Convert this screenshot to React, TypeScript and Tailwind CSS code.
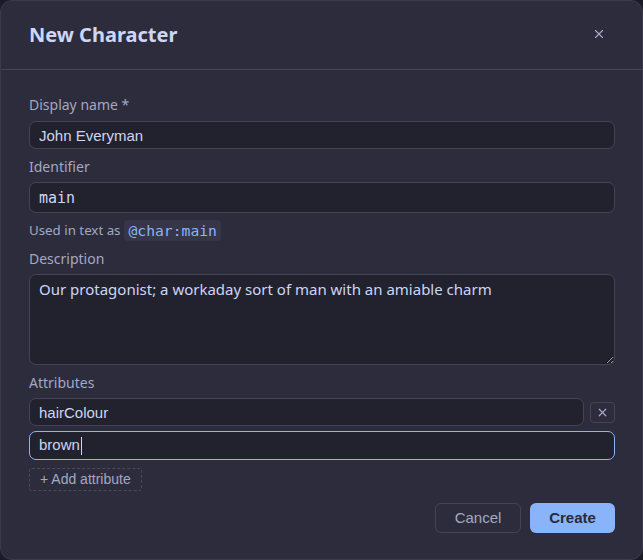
import { X } from "lucide-react";

const label = "block text-[14px] leading-[20px] text-[#a3a8c3] font-['Noto_Sans',sans-serif]";
const box = "w-full rounded-[7px] border bg-[#22212e] px-[9px] text-[15px] text-[#cdd6f4] outline-none";
const sans = "font-['Liberation_Sans',Arial,sans-serif]";

export default function App() {
  return (
    <div className="min-h-[560px] w-full bg-[#1b1a25]">
      <div className="flex h-[560px] w-full flex-col rounded-[12px] border border-[#3b3a4d] bg-[#2d2c3c]">
        <div className="flex h-[69px] items-center justify-between border-b border-[#46465a] pl-[28px] pr-[36px]">
          <h2 className="font-['Noto_Sans',sans-serif] text-[20px] font-bold text-[#cdd6f4]">New Character</h2>
          <button className="mb-[3px] text-[#a3a8c3]">
            <X size={14} strokeWidth={2} />
          </button>
        </div>

        <div className="flex flex-1 flex-col pl-[28px] pr-[27px] pt-[25px]">
          <label className={label}>Display name *</label>
          <input className={`${box} ${sans} mt-[6px] h-[28px] border-[#444457]`} defaultValue="John Everyman" />

          <label className={`${label} mt-[8px]`}>Identifier</label>
          <input
            className={`${box} mt-[5px] h-[31px] border-[#444457] font-['DejaVu_Sans_Mono',monospace]`}
            defaultValue="main"
          />
          <p className="mt-[7px] flex items-center gap-[4px] font-['Noto_Sans',sans-serif] text-[13.3px] text-[#a3a8c3]">
            Used in text as
            <code className="rounded-[4px] bg-[#373648] px-[4px] py-[1px] font-['DejaVu_Sans_Mono',monospace] text-[14.7px] leading-[19px] text-[#89b4fa]">
              @char:main
            </code>
          </p>

          <label className={`${label} mt-[8px]`}>Description</label>
          <textarea
            className={`${box} mt-[5px] h-[91px] resize-y border-[#444457] pt-[3px] font-['Noto_Sans',sans-serif] text-[14.5px] leading-[22px]`}
            defaultValue="Our protagonist; a workaday sort of man with an amiable charm"
          />

          <label className={`${label} mt-[8px]`}>Attributes</label>
          <div className="mt-[5px] flex items-center gap-[6px]">
            <input className={`${box} ${sans} h-[28px] flex-1 border-[#444457]`} defaultValue="hairColour" />
            <button className="flex h-[21px] w-[25px] shrink-0 items-center justify-center rounded-[4px] border border-[#444457] text-[#a3a8c3]">
              <X size={13} strokeWidth={2.2} />
            </button>
          </div>
          <div className={`${box} ${sans} mt-[5px] flex h-[29px] items-center border-[#89b4fa]`}>
            brown<span className="ml-[1px] inline-block h-[18px] w-[1px] bg-[#cdd6f4]" />
          </div>
          <div className="mt-[6px]">
            <button className={`h-[23px] rounded-[3px] border border-dashed border-[#4a4a5e] px-[10px] text-[14px] text-[#a3a8c3] ${sans}`}>
              + Add attribute
            </button>
          </div>

          <div className="mt-[12px] flex justify-end gap-[9px]">
            <button className={`h-[30px] w-[86px] rounded-[6px] border border-[#444457] text-[15px] text-[#a3a8c3] ${sans}`}>
              Cancel
            </button>
            <button className={`h-[30px] w-[85px] rounded-[6px] bg-[#89b4fa] text-[15px] font-bold text-[#2a2a3a] ${sans}`}>
              Create
            </button>
          </div>
        </div>
      </div>
    </div>
  );
}
